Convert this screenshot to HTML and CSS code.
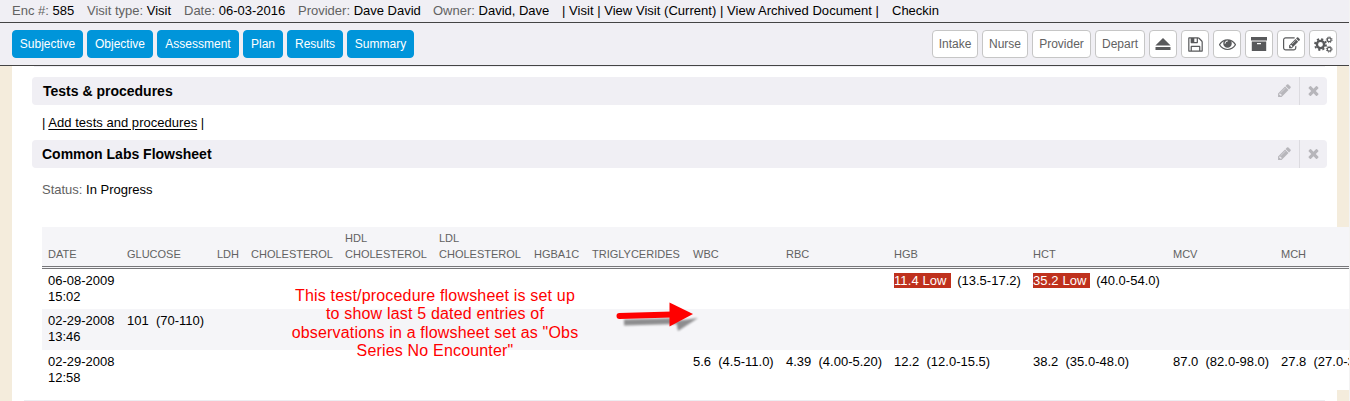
FILE: index.html
```html
<!DOCTYPE html>
<html lang="en">
<head>
<meta charset="utf-8">
<title>Encounter 585</title>
<link rel="stylesheet" href="styles.css">
</head>
<body>
<div class="app">
  <header class="info">
    <div class="w-enc"><i>Enc #:</i> 585</div>
    <div class="w-type"><i>Visit type:</i> Visit</div>
    <div class="w-date"><i>Date:</i> 06-03-2016</div>
    <div class="w-prov"><i>Provider:</i> Dave David</div>
    <div class="w-owner"><i>Owner:</i> David, Dave</div>
    <div class="w-links">| Visit | View Visit (Current) | View Archived Document |</div>
    <div>Checkin</div>
  </header>
  <nav class="toolbar">
    <div class="group">
      <button class="btn blue b71">Subjective</button>
      <button class="btn blue b66">Objective</button>
      <button class="btn blue b82">Assessment</button>
      <button class="btn blue b40">Plan</button>
      <button class="btn blue b56">Results</button>
      <button class="btn blue b67">Summary</button>
    </div>
    <div class="group">
      <button class="btn b46">Intake</button>
      <button class="btn b46">Nurse</button>
      <button class="btn b59">Provider</button>
      <button class="btn b50">Depart</button>
      <button class="btn icon" aria-label="Eject"><svg width="16" height="14" viewBox="0 0 16 14"><path d="M8 1L15.6 8.6H.4zM.5 10h15v3H.5z"/></svg></button>
      <button class="btn icon" aria-label="Save"><svg width="17" height="17" viewBox="0 0 1792 1792"><path d="M512 1536h768v-384h-768v384zm896 0h128v-896q0-14-10-38.5t-20-34.5l-281-281q-10-10-34-20t-39-10v416q0 40-28 68t-68 28h-576q-40 0-68-28t-28-68v-416h-128v1280h128v-416q0-40 28-68t68-28h832q40 0 68 28t28 68v416zm-384-928v-320q0-13-9.5-22.5t-22.5-9.5h-192q-13 0-22.5 9.5t-9.5 22.5v320q0 13 9.5 22.5t22.5 9.5h192q13 0 22.5-9.5t9.5-22.5zm640 32v928q0 40-28 68t-68 28h-1344q-40 0-68-28t-28-68v-1344q0-40 28-68t68-28h928q40 0 88 20t76 48l280 280q28 28 48 76t20 88z"/></svg></button>
      <button class="btn icon" aria-label="View"><svg width="17" height="17" viewBox="0 50 1792 1792"><path d="M1664 960q-152-236-381-353 61 104 61 225 0 185-131.5 316.5t-316.5 131.5-316.5-131.5-131.5-316.5q0-121 61-225-229 117-381 353 133 205 333.5 326.5t434.5 121.5 434.5-121.5 333.5-326.5zm-720-384q0-20-14-34t-34-14q-125 0-214.5 89.5t-89.5 214.5q0 20 14 34t34 14 34-14 14-34q0-86 61-147t147-61q20 0 34-14t14-34zm848 384q0 34-20 69-140 230-376.5 368.5t-499.5 138.5-499.5-139-376.5-368q-20-35-20-69t20-69q140-229 376.5-368t499.5-139 499.5 139 376.5 368q20 35 20 69z"/></svg></button>
      <button class="btn icon" aria-label="Archive"><svg width="16" height="14" viewBox="0 0 16 14"><path fill-rule="evenodd" d="M0 0h16v3.600H0zM.8 4.400h14.400V14H.8zM6 6v1.200h4V6z"/></svg></button>
      <button class="btn icon" aria-label="Edit"><svg width="17" height="17" viewBox="0 0 1792 1792"><path d="M888 1184l116-116-152-152-116 116v56h96v96h56zm440-720q-16-16-33 1l-350 350q-17 17-1 33t33-1l350-350q17-17 1-33zm80 594v190q0 119-84.5 203.5t-203.5 84.5h-832q-119 0-203.5-84.5t-84.5-203.5v-832q0-119 84.5-203.5t203.5-84.5h832q63 0 117 25 15 7 18 23 3 17-9 29l-49 49q-14 14-32 8-23-6-45-6h-832q-66 0-113 47t-47 113v832q0 66 47 113t113 47h832q66 0 113-47t47-113v-126q0-13 9-22l64-64q15-15 35-7t20 29zm-96-738l288 288-672 672h-288v-288zm444 132l-92 92-288-288 92-92q28-28 68-28t68 28l152 152q28 28 28 68t-28 68z"/></svg></button>
      <button class="btn icon" aria-label="Settings"><svg class="gears" width="19" height="17" viewBox="0 0 19 17"><circle cx="6.500" cy="8.500" r="3.600" stroke-width="2.400"/><circle cx="6.500" cy="8.500" r="5.500" stroke-width="1.800" stroke-dasharray="2.16 2.16"/><circle cx="15.200" cy="3.800" r="1.900" stroke-width="1.200"/><circle cx="15.200" cy="3.800" r="2.900" stroke-width="1" stroke-dasharray="1.14 1.14"/><circle cx="15.200" cy="13.200" r="1.900" stroke-width="1.200"/><circle cx="15.200" cy="13.200" r="2.900" stroke-width="1" stroke-dasharray="1.14 1.14"/></svg></button>
    </div>
  </nav>
  <main class="page">
    <div class="prev"></div>
    <section class="head">
      <h2 class="nudge">Tests &amp; procedures</h2>
      <span class="act"><svg width="15" height="15" viewBox="0 0 1792 1792"><path d="M491 1536l91-91-235-235-91 91v107h128v128h107zm523-928q0-22-22-22-10 0-17 7l-542 542q-7 7-7 17 0 22 22 22 10 0 17-7l542-542q7-7 7-17zm-54-192l416 416-832 832h-416v-416zm683 96q0 53-37 90l-166 166-416-416 166-165q36-38 90-38 53 0 91 38l235 234q37 39 37 91z"/></svg></span>
      <span class="act close"><svg width="15" height="15" viewBox="0 0 1792 1792"><path d="M1490 1322q0 40-28 68l-136 136q-28 28-68 28t-68-28l-294-294-294 294q-28 28-68 28t-68-28l-136-136q-28-28-28-68t28-68l294-294-294-294q-28-28-28-68t28-68l136-136q28-28 68-28t68 28l294 294 294-294q28-28 68-28t68 28l136 136q28 28 28 68t-28 68l-294 294 294 294q28 28 28 68z"/></svg></span>
    </section>
    <p class="add">| <a>Add tests and procedures</a> |</p>
    <section class="head">
      <h2>Common Labs Flowsheet</h2>
      <span class="act"><svg width="15" height="15" viewBox="0 0 1792 1792"><path d="M491 1536l91-91-235-235-91 91v107h128v128h107zm523-928q0-22-22-22-10 0-17 7l-542 542q-7 7-7 17 0 22 22 22 10 0 17-7l542-542q7-7 7-17zm-54-192l416 416-832 832h-416v-416zm683 96q0 53-37 90l-166 166-416-416 166-165q36-38 90-38 53 0 91 38l235 234q37 39 37 91z"/></svg></span>
      <span class="act close"><svg width="15" height="15" viewBox="0 0 1792 1792"><path d="M1490 1322q0 40-28 68l-136 136q-28 28-68 28t-68-28l-294-294-294 294q-28 28-68 28t-68-28l-136-136q-28-28-28-68t28-68l294-294-294-294q-28-28-28-68t28-68l136-136q28-28 68-28t68 28l294 294 294-294q28-28 68-28t68 28l136 136q28 28 28 68t-28 68l-294 294 294 294q28 28 28 68z"/></svg></span>
    </section>
    <p class="status"><i>Status:</i> In Progress</p>
    <table class="labs">
      <colgroup><col class="c79"><col class="c90"><col class="c34"><col class="c94"><col class="c94"><col class="c95"><col class="c58"><col class="c101"><col class="c93"><col class="c108"><col class="c139"><col class="c140"><col class="c108"><col class="c110"></colgroup>
      <thead><tr><th>DATE</th><th>GLUCOSE</th><th>LDH</th><th>CHOLESTEROL</th><th>HDL CHOLESTEROL</th><th>LDL CHOLESTEROL</th><th>HGBA1C</th><th>TRIGLYCERIDES</th><th>WBC</th><th>RBC</th><th>HGB</th><th>HCT</th><th>MCV</th><th>MCH</th></tr></thead>
      <tbody>
        <tr><td>06-08-2009<br>15:02</td><td></td><td></td><td></td><td></td><td></td><td></td><td></td><td></td><td></td><td><b>11.4 Low&nbsp;</b>&nbsp; (13.5-17.2)</td><td><b>35.2 Low&nbsp;</b>&nbsp; (40.0-54.0)</td><td></td><td></td></tr>
        <tr class="alt"><td>02-29-2008<br>13:46</td><td>101&nbsp; (70-110)</td><td></td><td></td><td></td><td></td><td></td><td></td><td></td><td></td><td></td><td></td><td></td><td></td></tr>
        <tr><td>02-29-2008<br>12:58</td><td></td><td></td><td></td><td></td><td></td><td></td><td></td><td>5.6&nbsp; (4.5-11.0)</td><td>4.39&nbsp; (4.00-5.20)</td><td>12.2&nbsp; (12.0-15.5)</td><td>38.2&nbsp; (35.0-48.0)</td><td>87.0&nbsp; (82.0-98.0)</td><td>27.8&nbsp; (27.0-33.0)</td></tr>
      </tbody>
    </table>
    <div class="next"></div>
  </main>
  <div class="note">This test/procedure flowsheet is set up<br>to show last 5 dated entries of<br>observations in a flowsheet set as "Obs<br>Series No Encounter"</div>
  <svg class="arrow" width="90" height="44" viewBox="0 0 90 44">
    <defs><filter id="soft"><feGaussianBlur stdDeviation="1.3"/></filter></defs>
    <g filter="url(#soft)" opacity=".42"><path d="M14 22.500L66 21" stroke="#000" stroke-width="6"/><path d="M66 21L88 18 68 31z"/></g>
    <path d="M9.500 16L62 14.500" stroke="red" stroke-width="6" stroke-linecap="round"/><path d="M59.500 2.500L83 14 59.500 26.500z" fill="red"/>
  </svg>
</div>
</body>
</html>
```
FILE: styles.css
```css
* { box-sizing: border-box; }
body {
  margin: 0;
  background: #f4ecdc;
  color: #000;
  font: 13px/16px "Liberation Sans", Arial, sans-serif;
  overflow: hidden;
}
i { font-style: normal; color: #626262; }
.app { position: relative; height: 401px; width: 1350px; overflow: hidden; border-right: 1px solid #f3f3f3; }
.info { display: flex; height: 23px; padding: 3px 0 0 12px; background: #f0eff4; border-bottom: 1px solid #444; white-space: nowrap; }
.w-enc { width: 75px; }
.w-type { width: 97px; }
.w-date { width: 114px; }
.w-prov { width: 135px; }
.w-owner { width: 129px; }
.w-links { width: 330px; letter-spacing: .03px; }
.toolbar { display: flex; justify-content: space-between; height: 43px; padding: 7px 12px 0; background: #f0eff4; border-bottom: 1px solid #444; }
.group { display: flex; gap: 4px; }
.btn { display: flex; align-items: center; justify-content: center; height: 28px; padding: 0 0 1px; border: 1px solid #c6c6c6; border-radius: 4px; background: #fff; color: #626262; font: 12px/14px "Liberation Sans", Arial, sans-serif; }
.blue { border-color: #0095da; background: #0095da; color: #fff; }
.icon { width: 28px; padding: 0; }
.icon svg { fill: #58595b; flex: none; }
.icon .gears { fill: none; stroke: #58595b; }
.b40 { width: 40px; }
.b46 { width: 46px; }
.b50 { width: 50px; }
.b56 { width: 56px; }
.b59 { width: 59px; }
.b66 { width: 66px; }
.b67 { width: 67px; }
.b71 { width: 71px; }
.b82 { width: 82px; }
.page { width: 1325px; height: 335px; margin-left: 12px; padding: 0 10px 0 20px; background: #fff; }
.prev { height: 1px; margin: 0 2px 10px; background: #f0eff4; }
.head { display: flex; align-items: center; height: 28px; border-radius: 4px; background: #f0eff4; }
.head h2 { flex: 1; margin: 0; padding-left: 10px; font-size: 14px; line-height: 16px; }
.head .nudge { padding-left: 11px; }
.act { display: flex; align-items: center; justify-content: center; width: 29px; height: 28px; padding-bottom: 1px; }
.act svg { fill: #b7b6bb; }
.close { width: 28px; border-left: 1px solid #dcdbe0; }
.add { margin: 0; padding: 10px 10px 9px; letter-spacing: .03px; }
.add a { text-decoration: underline; text-underline-offset: 2px; }
.status { margin: 0; height: 59px; padding: 14px 10px 0; }
.labs { width: 1343px; margin-left: 10px; table-layout: fixed; border-collapse: separate; border-spacing: 0; background: #fff; }
.labs th { height: 42px; padding: 3px 6px 4px; border-bottom: 3px double #77777a; background: #f5f5f8; color: #626262; font-size: 11px; font-weight: 400; line-height: 16px; text-align: left; vertical-align: bottom; }
.labs td { height: 40px; padding: 4px 0 4px 6px; vertical-align: top; white-space: nowrap; }
.labs .alt td { height: 41px; background: #f5f5f8; }
.labs b { display: inline-block; width: 57px; height: 15px; margin-right: -1px; line-height: 15px; letter-spacing: .1px; background: #bf311d; color: #fff; font-weight: 400; }
.c34 { width: 34px; }
.c58 { width: 58px; }
.c79 { width: 79px; }
.c90 { width: 90px; }
.c93 { width: 93px; }
.c94 { width: 94px; }
.c95 { width: 95px; }
.c101 { width: 101px; }
.c108 { width: 108px; }
.c110 { width: 110px; }
.c139 { width: 139px; }
.c140 { width: 140px; }
.next { height: 1px; margin: 10px 2px 0 -8px; background: #ededf1; }
.note { position: absolute; left: 285px; top: 287px; width: 300px; color: #f00; font-size: 16px; letter-spacing: .18px; line-height: 18.4px; text-align: center; white-space: nowrap; }
.arrow { position: absolute; left: 610px; top: 300px; }
```
